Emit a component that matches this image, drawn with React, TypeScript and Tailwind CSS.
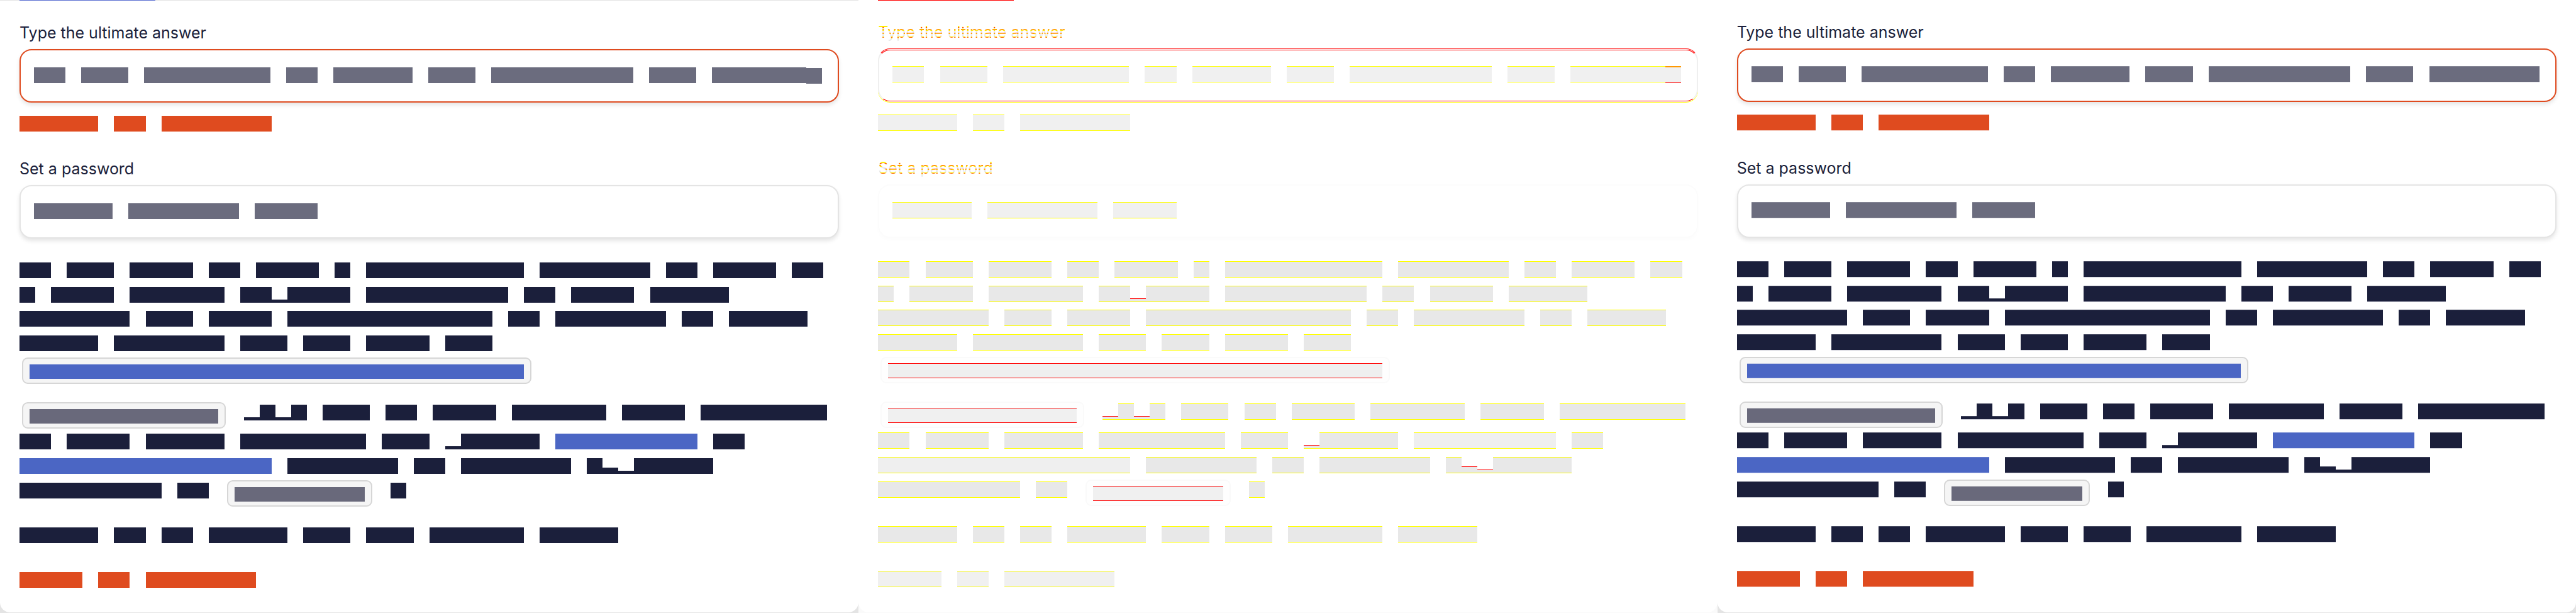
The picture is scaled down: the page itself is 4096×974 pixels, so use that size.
import { useId } from "react";

type Variant = "before" | "diff" | "after";
type Tone = "ink" | "muted" | "link" | "error" | "linkCode" | "code";
type Shape = "full" | "low" | "comma" | "nudged";

/** A stretch of a line, measured in text units: `gap` before it, then `width`. */
type Run = { gap: number; width: number; tone: Tone; shape: Shape };

const CELL = 26;
const CONTENT = 1352;
const FIELD = 1304;

const TONES: Record<Variant, Record<Tone, string>> = {
  before: {
    ink: "bg-[#1b1f3b] border-t-transparent border-b-[#1b1f3b]",
    muted: "bg-[#6b6c7e] border-t-transparent border-b-[#6b6c7e]",
    link: "bg-[#4b66c4] border-t-transparent border-b-[#4b66c4]",
    error: "bg-[#df4b1f] border-t-transparent border-b-[#df4b1f]",
    linkCode: "bg-[#4b66c4] border-t-transparent border-b-[#4b66c4]",
    code: "bg-[#69697b] border-t-transparent border-b-[#69697b]",
  },
  diff: {
    ink: "bg-[#e8e8e8] border-t-[#ffff00] border-b-[#ffff00]",
    muted: "bg-[#f0f0f0] border-t-[#ffff00] border-b-[#ffff00]",
    link: "bg-[#efefef] border-t-[#ffff00] border-b-[#ffff00]",
    error: "bg-[#f0f0f0] border-t-[#ffff00] border-b-[#ffff00]",
    linkCode: "bg-[#efefef] border-t-[#ff0000] border-b-[#ff0000]",
    code: "bg-[#f0f0f0] border-t-[#ff0000] border-b-[#ff0000]",
  },
  after: {
    ink: "bg-[#1b1f3b] border-t-[#45485f] border-b-[#cfd0d9]",
    muted: "bg-[#6b6c7e] border-t-[#868796] border-b-[#e0e0e4]",
    link: "bg-[#4b66c4] border-t-[#6b81ce] border-b-[#d9dff2]",
    error: "bg-[#df4b1f] border-t-[#e46c49] border-b-[#f8dad1]",
    linkCode: "bg-[#4b66c4] border-t-[#d3d8ea] border-b-[#6d82cd]",
    code: "bg-[#69697b] border-t-[#d9d9dc] border-b-[#828291]",
  },
};

const SHAPES: Record<Shape, string> = {
  full: "h-[26px] border-t border-b",
  low: "h-[6px] mt-[20px] border-t border-b",
  comma: "h-[11px] mt-[15px] border-t border-b",
  nudged: "h-[27px] border-t-2 border-b",
};

/** Turns "2 3 L1+4" into runs: spaces are word gaps, "+" joins, letters mark the shape or tone. */
function parse(line: string, lead = 0): Run[] {
  const runs: Run[] = [];
  line.split(" ").forEach((word, w) => {
    word.split("+").forEach((part, p) => {
      const mark = part[0];
      const cells = Number(part.replace(/^\D/, ""));
      runs.push({
        gap: p > 0 ? 0 : w > 0 ? CELL : lead,
        width: cells * CELL,
        tone: mark === "A" ? "link" : "ink",
        shape: mark === "L" ? "low" : mark === "C" ? "comma" : mark === "N" ? "nudged" : "full",
      });
    });
  });
  return runs;
}

function Bars({
  line,
  variant,
  tone,
  total = CONTENT,
  lead = 0,
}: {
  line: string;
  variant: Variant;
  tone?: Tone;
  total?: number;
  lead?: number;
}) {
  return (
    <>
      {parse(line, lead).map((run, i) => {
        const color = tone ?? run.tone;
        const className = `block shrink-0 bg-clip-padding ${SHAPES[run.shape]} ${TONES[variant][color]} ${
          variant === "diff" && (run.shape === "low" || run.shape === "comma") ? "border-t-[#ff0000]!" : ""
        } ${variant === "diff" && run.shape === "nudged" ? "border-t-[#ff9900]! border-b-[#ff0000]!" : ""}`;
        const style = {
          marginLeft: `${(run.gap / total) * 100}%`,
          width: `${(run.width / total) * 100}%`,
        };
        return color === "link" ? (
          <a key={i} href="#details" aria-label="Details" className={className} style={style} />
        ) : (
          <span key={i} className={className} style={style} />
        );
      })}
    </>
  );
}

const CHIP: Record<Variant, string> = {
  before: "bg-[#f5f5f5] border-[#d6d6d6]",
  diff: "bg-[#fefefe] border-[#fafafa]",
  after: "bg-[#f5f5f5] border-[#d6d6d6]",
};

function Chip({ gap, width, tone, variant }: { gap: number; width: number; tone: Tone; variant: Variant }) {
  return (
    <code
      className={`block h-[42px] shrink-0 rounded-[9px] border-2 px-[10px] pt-[8px] ${CHIP[variant]}`}
      style={{ marginLeft: `${(gap / CONTENT) * 100}%`, width: `${(width / CONTENT) * 100}%` }}
    >
      <span className={`block h-[24px] border-t border-b bg-clip-padding ${TONES[variant][tone]}`} />
    </code>
  );
}

const LABEL: Record<Variant, string> = {
  before: "text-[#1b1f3b]",
  diff: "bg-clip-text text-transparent bg-[linear-gradient(to_bottom,#ffee00_0_8px,#ff3000_8px_9px,#ffee00_9px_10px,#e8e8e8_10px_11px,#ffe000_11px_12px,#ff5000_12px_13px,#ffe600_13px_14px,#e8e8e8_14px_17px,#ff3000_17px_18px,#ffd000_18px_19px,#e8e8e8_19px_23px,#ffe600_23px_24px,#ff7000_24px_25px,#ffe600_25px_26px,#e8e8e8_26px_30px,#ff4000_30px_32px)]",
  after: "text-[#1b1f3b]",
};

const BOX = {
  plain: {
    before: "h-[85px] border-2 border-[#e4e4e4] shadow-[0_4px_6px_rgba(0,0,0,0.1)]",
    diff: "h-[85px] border-2 border-[#fcfcfc] shadow-[0_4px_6px_rgba(0,0,0,0.01)]",
    after: "h-[85px] border-2 border-[#e4e4e4] shadow-[0_4px_6px_rgba(0,0,0,0.1)]",
  },
  invalid: {
    before: "h-[85px] border-2 border-[#df4b1f] shadow-[0_4px_6px_rgba(0,0,0,0.1)]",
    diff: "h-[84px] mb-px border-x-2 border-b border-t-[3px] border-x-[#efefef] border-b-[#ff0000] border-t-[#ff0000] [border-top-style:double] shadow-[0_1px_0_#ffffff,0_2px_0_#ffff00]",
    after: "h-[85px] border-2 border-[#df4b1f] shadow-[0_4px_6px_rgba(0,0,0,0.1)]",
  },
};

function Field({
  label,
  type,
  line,
  variant,
  state,
}: {
  label: string;
  type: string;
  line: string;
  variant: Variant;
  state: "plain" | "invalid";
}) {
  const id = useId();
  return (
    <div className="flex flex-col items-start">
      <label htmlFor={id} className={`mb-[10px] text-[25px] leading-[32px] ${LABEL[variant]}`}>
        {label}
      </label>
      <div className="relative w-full">
        <input
          id={id}
          type={type}
          aria-invalid={state === "invalid"}
          className={`block w-full rounded-[19px] bg-white px-[23px] outline-none ${BOX[state][variant]}`}
        />
        <div className="pointer-events-none absolute inset-x-[23px] top-[28px] flex items-start">
          <Bars line={line} variant={variant} tone="muted" total={FIELD} />
        </div>
      </div>
    </div>
  );
}

function Line({ children }: { children: React.ReactNode }) {
  return <div className="flex items-start">{children}</div>;
}

function Panel({ variant }: { variant: Variant }) {
  const v = variant;
  const answer = v === "after" ? "2 3 8 2 5 3 9 3 7" : "2 3 8 2 5 3 9 3 6+N1";
  return (
    <section className={`flex flex-1 flex-col pb-px ${v === "diff" ? "bg-[#fafafa]" : "bg-[#e4e4e4]"}`}>
      <div className="flex flex-1 flex-col rounded-b-[16px] bg-white">
        <div className={`flex h-px px-[31px] ${v === "before" ? "bg-[#e4e4e4]" : ""}`}>
          {v !== "after" && <div className={`w-[216px] ${v === "before" ? "bg-[#5a6fd2]" : "bg-[#ff0000]"}`} />}
        </div>
        <div className={`flex flex-col px-[31px] ${v === "before" ? "pt-[35px]" : "pt-[34px]"}`}>
          <Field label="Type the ultimate answer" type="text" line={answer} variant={v} state="invalid" />
          <div className="mt-[20px] flex" role="alert">
            <Bars line="5 2 7" variant={v} tone="error" />
          </div>
          <div className="mt-[43px]">
            <Field label="Set a password" type="password" line="5 7 4" variant={v} state="plain" />
          </div>

          <div className="mt-[37px] flex h-[142px] flex-col justify-between">
            <Line>
              <Bars variant={v} line="2 3 4 2 4 1 10 7 2 4 2" />
            </Line>
            <Line>
              <Bars variant={v} line="1 4 6 2+L1+4 9 2 4 5" />
            </Line>
            <Line>
              <Bars variant={v} line="7 3 4 13 2 7 2 5" />
            </Line>
            <Line>
              <Bars variant={v} line="5 7 3 3 4 3" />
            </Line>
          </div>
          <div className="mt-[10px] flex">
            <Chip variant={v} gap={4} width={840} tone="linkCode" />
          </div>

          <div className="mt-[29px] flex">
            <Chip variant={v} gap={4} width={336} tone="code" />
            <div className="flex w-full min-w-0 shrink-0 items-start pt-[3px]">
              <Bars variant={v} line="L1+1+L1+1 3 2 4 6 4 8" lead={30} />
            </div>
          </div>
          <div className="mt-[7px] flex flex-col gap-[13px]">
            <Line>
              <Bars variant={v} line="2 4 5 8 3 L1+5 A9 2" />
            </Line>
            <Line>
              <Bars variant={v} line="A16 7 2 7 1+C1+L1+5" />
            </Line>
          </div>
          <div className="relative mt-[10px] flex">
            <div className="flex w-full shrink-0 items-start">
              <span className="contents [&>span]:mt-[3px]">
                <Bars variant={v} line="9 2" />
              </span>
              <Chip variant={v} gap={30} width={240} tone="code" />
              <span className="contents [&>span]:mt-[3px]">
                <Bars variant={v} line="1" lead={30} />
              </span>
            </div>
          </div>

          <div className="mt-[32px] flex">
            <Bars variant={v} line="5 2 2 5 3 3 6 5" />
          </div>
          <div className="mt-[45px] flex">
            <Bars variant={v} tone="error" line="4 2 7" />
          </div>
        </div>
      </div>
    </section>
  );
}

export default function App() {
  return (
    <main className="flex min-h-screen w-full overflow-hidden bg-white font-['Inter',sans-serif]">
      <Panel variant="before" />
      <Panel variant="diff" />
      <Panel variant="after" />
    </main>
  );
}
